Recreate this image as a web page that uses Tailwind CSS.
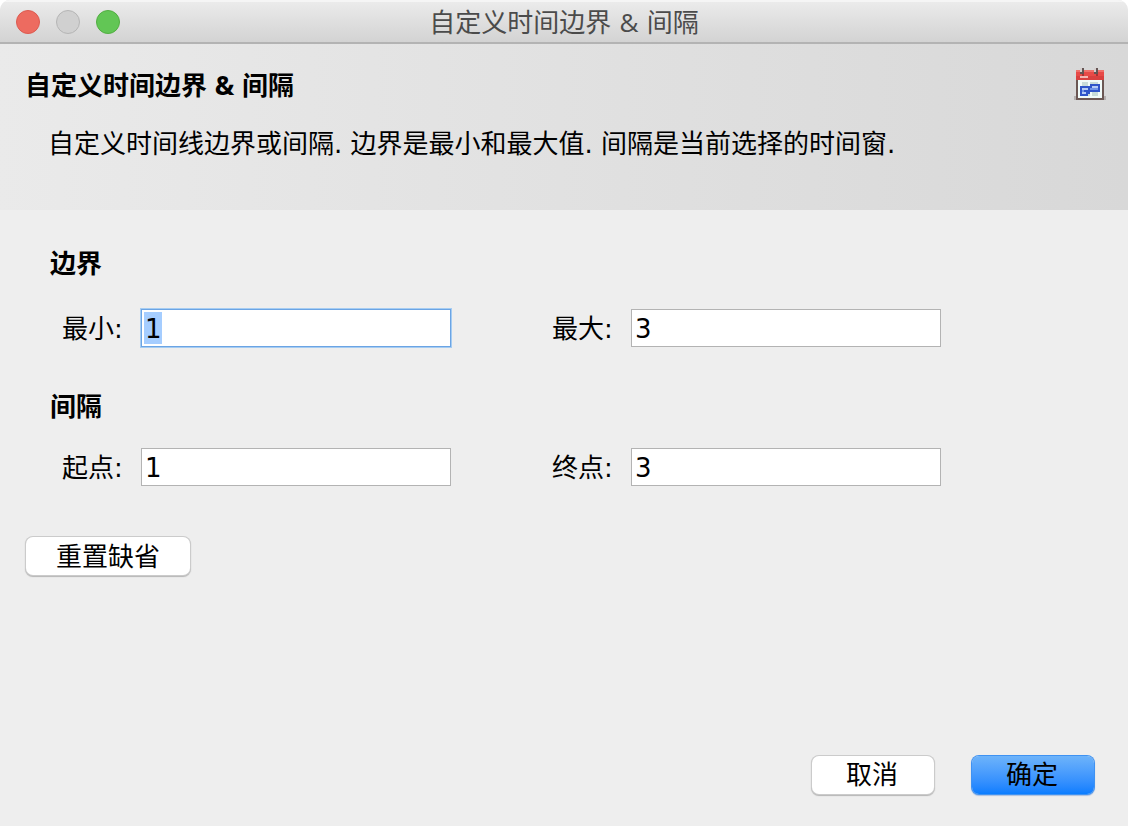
<!DOCTYPE html>
<html lang="zh-CN">

<head>
    <meta charset="UTF-8">
    <meta name="viewport" content="width=device-width, initial-scale=1.0">
    <title>自定义时间边界 &amp; 间隔</title>
    <script src="https://cdn.jsdelivr.net/npm/@tailwindcss/browser@4"></script>
</head>

<body class="bg-white overflow-hidden">
    <div class="flex h-[826px] w-[1128px] flex-col overflow-hidden rounded-t-[10px] bg-[#eeeeee] font-['DejaVu_Sans','Noto_Sans_CJK_SC',sans-serif] text-[26px] leading-[38px] text-black">
        <!-- title bar -->
        <div class="grid h-11 shrink-0 grid-cols-[1fr_auto_1fr] items-center border-b-2 border-[#b3b3b3] bg-linear-to-b from-[#ececec] to-[#d3d3d3] pt-[2px] shadow-[inset_0_2px_0_#f5f5f5]">
            <div class="flex gap-4 pl-4">
                <span class="size-6 rounded-full border border-[#dc5a50] bg-[#ed6b60]"></span>
                <span class="size-6 rounded-full border border-[#b5b5b5] bg-[#d0d0d0]"></span>
                <span class="size-6 rounded-full border border-[#52ae42] bg-[#62c655]"></span>
            </div>
            <h1 class="font-['Open_Sans','Noto_Sans_CJK_SC',sans-serif] text-[#4b4b4b] [word-spacing:1.5px]">自定义时间边界 &amp; 间隔</h1>
        </div>

        <!-- header -->
        <div class="flex h-[166px] shrink-0 items-start justify-between bg-linear-to-r from-[#eaeaea] to-[#d8d8d8] pl-[25px] pr-[22px]">
            <div>
                <h2 class="mt-[22px] font-['Open_Sans','Noto_Sans_CJK_SC',sans-serif] font-bold [word-spacing:1px]">自定义时间边界 &amp; 间隔</h2>
                <p class="mt-[21px] pl-[23px]">自定义时间线边界或间隔. 边界是最小和最大值. 间隔是当前选择的时间窗.</p>
            </div>
            <!-- calendar icon -->
            <svg class="mt-6 size-8" viewBox="0 0 16 16" shape-rendering="crispEdges">
                <path fill="#b3afae" d="M0 14h16v2H0z" />
                <path fill="#6b5753" d="M1 6h14v10H1z" />
                <path fill="#d9403f" d="M1 1h14v5H1z" />
                <path fill="#f0706a" d="M1 1h14v1H1z" />
                <path fill="#e84a47" d="M1 2h14v2H1z" />
                <path fill="#f3b5b2" d="M3 4h4v1H3z" />
                <path fill="#f1fbf9" d="M2 6h12v9H2z" />
                <path fill="#c8dcd9" d="M4 7h3v2H4zM8 7h4v1H8zM9 12h3v2H9zM8 12v2H7v-2z" />
                <path fill="#2f55c9" d="M3 9h5V8h5v4H8v1H7v1H3z" />
                <path fill="#b4cbf6" d="M9 9h3v1H9zM4 12h2v1H4zM4 10h3v1H4z" />
                <path fill="#6f93e8" d="M8 10h4v1H8zM4 11h3v1H4z" />
                <path fill="#2f55c9" d="M5 11h7v1H5zM7 9h1v3H7z" />
                <path fill="#d5cfce" d="M3 0h2v2H3zM10 0h2v2h-2z" />
                <path fill="#655453" d="M4 0h1v3H4zM11 0h1v3h-1zM3 2h1v1H3zM10 2h1v1h-1z" />
                <path fill="#a43335" d="M4 3h1v1H4zM11 3h1v1h-1z" />
            </svg>
        </div>

        <!-- form -->
        <div class="flex grow flex-col pt-[35px]">
            <h3 class="pl-[50px] font-bold">边界</h3>
            <div class="mt-[26px] flex pl-[62px]">
                <label class="flex w-[490px]">
                    <span class="w-[79px] leading-10">最小:</span>
                    <span class="h-[38px] w-[310px] border border-[#6ba4e4] bg-white pl-[2px] shadow-[0_0_0_1px_#a5ccf2]"><span class="mt-[2px] block h-8 w-[18px] bg-[#a5cdff] pl-px leading-[34px]">1</span></span>
                </label>
                <label class="flex">
                    <span class="w-[79px] leading-10">最大:</span>
                    <span class="h-[38px] w-[310px] border border-[#b3b3b3] bg-white pl-[3px] leading-[38px]">3</span>
                </label>
            </div>
            <h3 class="mt-[39px] pl-[50px] font-bold">间隔</h3>
            <div class="mt-[22px] flex pl-[62px]">
                <label class="flex w-[490px]">
                    <span class="w-[79px] leading-10">起点:</span>
                    <span class="h-[38px] w-[310px] border border-[#b3b3b3] bg-white pl-[3px] leading-[38px]">1</span>
                </label>
                <label class="flex">
                    <span class="w-[79px] leading-10">终点:</span>
                    <span class="h-[38px] w-[310px] border border-[#b3b3b3] bg-white pl-[3px] leading-[38px]">3</span>
                </label>
            </div>
            <button class="mt-[49px] ml-[26px] h-[38px] w-[164px] rounded-[7px] bg-white pt-px shadow-[0_0_0_1px_#cbcbcb,0_1px_1px_1px_#b5b5b5]">重置缺省</button>

            <div class="mt-auto mb-8 flex justify-end gap-[38px] pr-[34px]">
                <button class="h-[38px] w-[122px] rounded-[7px] bg-white pr-[2px] shadow-[0_0_0_1px_#cbcbcb,0_1px_1px_1px_#b5b5b5]">取消</button>
                <button class="h-[38px] w-[122px] rounded-[7px] bg-linear-to-b from-[#6db3fa] to-[#087dff] pr-[2px] shadow-[0_0_0_1px_#3f92f2,0_1px_1px_1px_#a9bfe0]">确定</button>
            </div>
        </div>
    </div>
</body>

</html>
